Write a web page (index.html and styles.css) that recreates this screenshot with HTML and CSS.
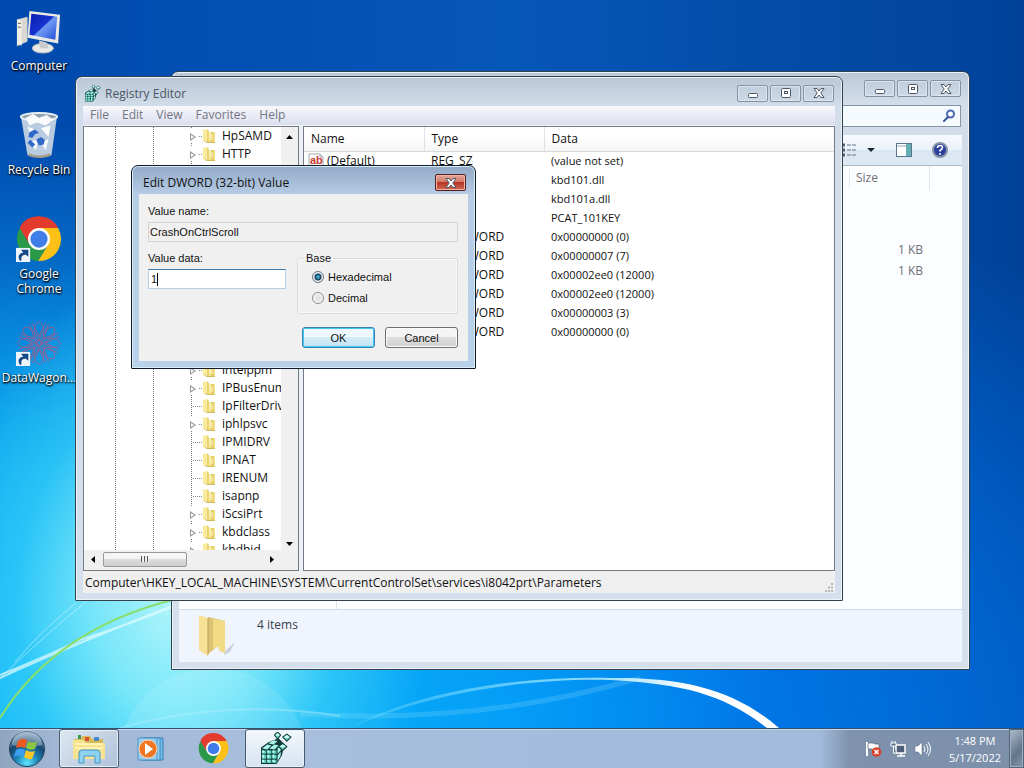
FILE: index.html
```html
<!DOCTYPE html>
<html lang="en">
<head>
<meta charset="utf-8">
<title>Registry Editor</title>
<link rel="stylesheet" href="styles.css">
</head>
<body>
<svg class="defs" width="0" height="0" aria-hidden="true">
  <defs>
    <linearGradient id="gold" x1="0" x2="1"><stop offset="0" stop-color="#fdf3a8"/><stop offset=".45" stop-color="#f0dc78"/><stop offset=".55" stop-color="#d9bf54"/><stop offset="1" stop-color="#f7e88c"/></linearGradient>
    <linearGradient id="screen" x1="0" x2="1" y1="0" y2="1"><stop offset="0" stop-color="#0a1cae"/><stop offset=".48" stop-color="#1633cf"/><stop offset=".52" stop-color="#6f9af0"/><stop offset="1" stop-color="#2250dd"/></linearGradient>
    <radialGradient id="orb" cx=".5" cy=".9" r=".9"><stop offset="0" stop-color="#5fe6ff"/><stop offset=".35" stop-color="#1b86b8"/><stop offset=".65" stop-color="#17456e"/><stop offset="1" stop-color="#8fb0cc"/></radialGradient>
  </defs>
  <symbol id="chrome" viewBox="0 0 48 48">
    <path fill="#e33b2e" d="M24 24 4.100 11A23 23 0 0 1 44 12.500z"/>
    <path fill="#fbc116" d="M24 12.500H44A23 23 0 0 1 23 47L34 29z"/>
    <path fill="#2a9a48" d="M4.100 12.500 14 29.800 24 35 31 33 23 47A23 23 0 0 1 4.100 12.500z"/>
    <path fill="#e33b2e" d="M4 12.600A23 23 0 0 1 44 12.500H24L13 28z"/>
    <circle cx="24" cy="24" r="11.500" fill="#fff"/><circle cx="24" cy="24" r="9" fill="#3f7de8"/>
  </symbol>
  <symbol id="key" viewBox="0 0 14 16">
    <path d="M1 2 6 1v13l-5-1z" fill="#f8ec9c"/><path d="M6 4h7v10H6z" fill="url(#gold)"/><path d="M1 13 6 14h7v1H5z" fill="#d3ba5c"/><path d="M8 3v8M10 6v6" stroke="#fffbd0"/><path d="M6 2v12" stroke="#d8bc50"/>
  </symbol>
  <symbol id="reg" viewBox="0 0 32 32">
    <path d="M2 15 9 10 19 6 25 12 22 23 17 31 2 31z" fill="#123a38"/>
    <path d="M3 16 8 12l4 1-4 4zM10 16l5-4 4 1-4 4zM9 11l5-3 4 1-4 3zM18 16l3-3v5l-3 3zM18 23l3-4v4l-3 5z" fill="#a9f7ea"/>
    <path d="M3 18h4v3H3zM8 18h4v3H8zM13 18h4v3h-4zM3 22h4v4H3zM8 22h4v4H8zM13 22h4v4h-4zM3 27h4v3H3zM8 27h4v3H8zM13 27h4v3h-4z" fill="#5ccdbb"/>
    <path d="M3 18h2v2H3zM8 18h2v2H8zM13 18h2v2h-2zM3 22h2v3H3zM8 22h2v3H8zM13 22h2v3h-2zM3 27h2v2H3zM8 27h2v2H8zM13 27h2v2h-2z" fill="#b8fff2"/>
    <path d="m18 0 3 3-3 4-3-4zM27 2l4 3-4 4-4-4zM23 11l4 3-4 4-4-4z" fill="#5bc5b4" stroke="#173b39"/><path d="m16 3 2-2 2 2-2 1zM24 5l3-2 3 2-3 1zM20 14l3-2 3 2-3 1z" fill="#d3fff8"/>
  </symbol>
  <symbol id="min" viewBox="0 0 12 12"><rect x="1.500" y="6.500" width="9" height="4" rx="1" fill="#fff" stroke="#4d5767"/></symbol>
  <symbol id="max" viewBox="0 0 12 12"><rect x="1.500" y="1.500" width="9" height="9" rx="1" fill="#fff" stroke="#4d5767"/><rect x="4.500" y="4.500" width="3" height="2" fill="#fff" stroke="#4d5767"/></symbol>
  <symbol id="close" viewBox="0 0 12 12"><path d="M1 1.500h3l2 2.500 2-2.500h3L7.800 6 11 10.500H8L6 8l-2 2.500H1L4.200 6z" fill="#fff" stroke="#4d5767"/></symbol>
  <symbol id="shortcut" viewBox="0 0 14 14"><path d="M0 0h14v14H0z" fill="#edf4fb"/><path d="M4 13C1 9 3 5 7 5L5 2h7v7L9.500 7C6 7 4.500 9 5.500 12z" fill="#174a86"/></symbol>
</svg>

<main class="desktop">
  <svg class="wallpaper" viewBox="0 0 1024 728" preserveAspectRatio="none" aria-hidden="true">
    <defs><linearGradient id="ray" x1="0" x2="1"><stop offset="0" stop-color="#8fe8ff" stop-opacity=".2"/><stop offset=".5" stop-color="#aef0ff" stop-opacity=".7"/><stop offset=".8" stop-color="#fff"/></linearGradient></defs>
    <circle cx="213" cy="764" r="96" fill="#fff" fill-opacity=".1"/>
    <path d="M120 728Q230 698 340 716" fill="none" stroke="#b7efff" stroke-opacity=".4" stroke-width="2"/>
    <path d="M300 714Q480 725 640 678" fill="none" stroke="#9fe6ff" stroke-opacity=".2" stroke-width="5"/>
    <path d="M0 675Q50 655 80 640Q130 624 172 607M0 678Q60 650 172 606" fill="none" stroke="#e4fcff" stroke-opacity=".7" stroke-width="2"/>
    <path d="M0 678Q45 635 88 600M15 662Q40 632 76 603" fill="none" stroke="#dffaff" stroke-opacity=".5" stroke-width="1"/>
    <path d="M0 718Q55 630 172 600" fill="none" stroke="#8ade6a" stroke-width="2"/>
    <path d="M350 728C420 690 520 676 610 678C685 677 735 690 779 728L767 728C725 695 685 684 610 680C530 678 430 692 350 728z" fill="url(#ray)"/>
  </svg>

  <nav class="shortcuts" aria-label="Desktop">
    <a class="shortcut" href="#computer">
      <svg class="shortcut-icon" viewBox="0 0 48 48" aria-hidden="true">
        <path d="m1 12 11-3v26l-11 5z" fill="#d9d7d2"/><path d="m1 12 5 1v26l-5-1z" fill="#efede8"/><path d="M2 16h3M2 20h3" stroke="#555"/>
        <ellipse cx="28" cy="42" rx="11" ry="5" fill="#e9e9e7" stroke="#b9b9b7"/><path d="m24 34 8 2 2 6h-9z" fill="#ccc"/>
        <path d="M14 3 46 7 44 37 12 31z" fill="#e9e9e5"/><path d="M16 6 43 9 41 33 14 28z" fill="url(#screen)"/>
      </svg><span>Computer</span></a>
    <a class="shortcut" href="#recycle">
      <svg class="shortcut-icon" viewBox="0 0 48 48" aria-hidden="true">
        <path d="M5 4 43 3 37 45Q24 50 12 45z" fill="#d3dde6" fill-opacity=".88"/><ellipse cx="24" cy="5" rx="19" ry="4" fill="#8d9dac" stroke="#e9f0f5" stroke-width="2"/>
        <path d="m10 6 8-4 6 4 8-3 7 5-8 6-9-3-8 3zM12 15l10 4-6 8zM26 17l10-3-2 12zM14 32l9-4-2 12zM26 32l8-4-3 12z" fill="#f8fafc"/>
        <path d="m14 21 6-3 4 4-4 1-3 4-4-1zM21 29l5-3 4 3-1 5-5 1zM15 29l5 5-3 3-5-5z" fill="#2f68c8"/><path d="M13 43Q24 48 36 43v3Q24 50 13 46z" fill="#a39d8a"/>
      </svg><span>Recycle Bin</span></a>
    <a class="shortcut" href="#chrome">
      <svg class="shortcut-icon" viewBox="0 0 48 48" aria-hidden="true"><use href="#chrome"/><use href="#shortcut" y="33" width="15" height="15"/></svg><span>Google Chrome</span></a>
    <a class="shortcut" href="#datawagon">
      <svg class="shortcut-icon" viewBox="0 0 48 48" aria-hidden="true">
        <g fill="none" stroke="#8c6394" stroke-width="1"><g id="petals"><ellipse cx="24" cy="12" rx="5" ry="10"/><ellipse cx="24" cy="36" rx="5" ry="10"/><path d="M17 3 24 17 31 3M17 45 24 31 31 45"/></g><use href="#petals" transform="rotate(45 24 24)"/><use href="#petals" transform="rotate(90 24 24)"/><use href="#petals" transform="rotate(135 24 24)"/></g>
        <use href="#shortcut" y="33" width="15" height="15"/></svg><span>DataWagon...</span></a>
  </nav>

  <section class="window explorer" aria-label="Explorer">
    <header class="titlebar explorer-title">
      <div class="controls"><button aria-label="Minimize"><svg><use href="#min"/></svg></button><button aria-label="Maximize"><svg><use href="#max"/></svg></button><button aria-label="Close"><svg><use href="#close"/></svg></button></div>
    </header>
    <div class="searchbox"><input type="search" aria-label="Search"><svg class="lens" viewBox="0 0 14 14" aria-hidden="true"><circle cx="8.500" cy="5" r="3.500" fill="#fff" stroke="#4a69b4" stroke-width="2"/><path d="m6 8-4 4" stroke="#37539b" stroke-width="2" stroke-linecap="round"/></svg></div>
    <div class="toolbar">
      <button class="views" aria-label="Change view"><svg width="34" height="14" viewBox="0 0 34 14"><path d="M0 2h3M0 7h3M0 12h3" stroke="#55616f" stroke-width="3"/><path d="M5 2h4M10 2h4M5 7h4M10 7h4M5 12h4M10 12h4" stroke="#66717f"/><path d="M25 5h8l-4 4z" fill="#1c2733"/></svg></button>
      <button aria-label="Preview pane"><svg width="16" height="14" viewBox="0 0 16 14"><rect x=".5" y=".5" width="15" height="13" fill="#fff" stroke="#5c7390"/><path d="M10 1h5v12h-5z" fill="#62afb4"/><path d="M1 3h9" stroke="#92a5bb"/></svg></button>
      <button aria-label="Help"><svg width="16" height="16" viewBox="0 0 16 16"><circle cx="8" cy="8" r="7" fill="#2a3f9c" stroke="#8592a8" stroke-width="2"/><path d="M5.500 6q0-2.500 2.500-2.500t2.500 2q0 1.500-2.500 3v1" fill="none" stroke="#fff" stroke-width="1.600"/><circle cx="8" cy="12" r="1" fill="#fff"/></svg></button>
    </div>
    <div class="explorer-body">
      <div class="nav-pane"></div>
      <div class="files"><div class="file-head"><span>Size</span></div><p>1 KB</p><p>1 KB</p></div>
    </div>
    <footer class="details"><svg width="40" height="44" viewBox="0 0 40 44" aria-hidden="true"><path d="m27 39 11-10-5 10-6 3z" fill="#8b8f98" fill-opacity=".35"/><path d="M11 4 28 8v32l-5-2-2-5-10 8z" fill="#dcc373"/><path d="M16 6 28 8v32l-5-2-2-5-5 3z" fill="#f1dc85"/><path d="M2 2 11 5v38L2 37z" fill="#f6e196"/><path d="M11 5v37" stroke="#b8a05a"/></svg><span>4 items</span></footer>
  </section>

  <section class="window regedit" aria-label="Registry Editor">
    <header class="titlebar">
      <svg class="app-icon" aria-hidden="true"><use href="#reg"/></svg><h1>Registry Editor</h1>
      <div class="controls"><button aria-label="Minimize"><svg><use href="#min"/></svg></button><button aria-label="Maximize"><svg><use href="#max"/></svg></button><button aria-label="Close"><svg><use href="#close"/></svg></button></div>
    </header>
    <nav class="menu"><button>File</button><button>Edit</button><button>View</button><button>Favorites</button><button>Help</button></nav>
    <div class="panes">
      <div class="tree-pane">
        <ul class="tree">
          <li class="parent"><svg><use href="#key"/></svg>HpSAMD</li>
          <li class="parent"><svg><use href="#key"/></svg>HTTP</li>
          <li></li><li></li><li></li><li></li><li></li><li></li><li></li><li></li><li></li><li></li><li></li>
          <li class="parent"><svg><use href="#key"/></svg>intelppm</li>
          <li class="parent"><svg><use href="#key"/></svg>IPBusEnum</li>
          <li><svg><use href="#key"/></svg>IpFilterDriv</li>
          <li class="parent"><svg><use href="#key"/></svg>iphlpsvc</li>
          <li><svg><use href="#key"/></svg>IPMIDRV</li>
          <li><svg><use href="#key"/></svg>IPNAT</li>
          <li><svg><use href="#key"/></svg>IRENUM</li>
          <li><svg><use href="#key"/></svg>isapnp</li>
          <li class="parent"><svg><use href="#key"/></svg>iScsiPrt</li>
          <li class="parent"><svg><use href="#key"/></svg>kbdclass</li>
          <li class="parent"><svg><use href="#key"/></svg>kbdhid</li>
        </ul>
        <div class="vscroll"><svg viewBox="0 0 7 4"><path d="M0 4 3.500 0 7 4z"/></svg><svg viewBox="0 0 7 4"><path d="M0 0h7L3.500 4z"/></svg></div>
        <div class="hscroll"><svg viewBox="0 0 4 7"><path d="M4 0v7L0 3.500z"/></svg><div class="thumb"><i></i></div><svg viewBox="0 0 4 7"><path d="M0 0v7l4-3.500z"/></svg></div>
      </div>
      <div class="list-pane">
        <table>
          <thead><tr><th>Name</th><th>Type</th><th>Data</th></tr></thead>
          <tbody>
            <tr><td><span class="value"><svg viewBox="0 0 16 16" aria-hidden="true"><path d="M1 1h11l3 3v11H1z" fill="#fffafa" stroke="#a9a9b0"/><path d="M12 1v3h3" fill="none" stroke="#a9a9b0"/><text x="2" y="11">ab</text></svg>(Default)</span></td><td>REG_SZ</td><td>(value not set)</td></tr>
            <tr><td></td><td></td><td>kbd101.dll</td></tr>
            <tr><td></td><td></td><td>kbd101a.dll</td></tr>
            <tr><td></td><td></td><td>PCAT_101KEY</td></tr>
            <tr><td></td><td>REG_DWORD</td><td>0x00000000 (0)</td></tr>
            <tr><td></td><td>REG_DWORD</td><td>0x00000007 (7)</td></tr>
            <tr><td></td><td>REG_DWORD</td><td>0x00002ee0 (12000)</td></tr>
            <tr><td></td><td>REG_DWORD</td><td>0x00002ee0 (12000)</td></tr>
            <tr><td></td><td>REG_DWORD</td><td>0x00000003 (3)</td></tr>
            <tr><td></td><td>REG_DWORD</td><td>0x00000000 (0)</td></tr>
          </tbody>
        </table>
      </div>
    </div>
    <footer class="status"><span>Computer\HKEY_LOCAL_MACHINE\SYSTEM\CurrentControlSet\services\i8042prt\Parameters</span><svg width="10" height="10" viewBox="0 0 10 10" aria-hidden="true"><path d="M7 1h2M4 4.500h2M7 4.500h2M1 8h2M4 8h2M7 8h2" stroke="#b5b5b5" stroke-width="2"/></svg></footer>
  </section>

  <section class="window dialog" role="dialog" aria-labelledby="dialog-title">
    <header class="dialog-title"><h2 id="dialog-title">Edit DWORD (32-bit) Value</h2><button class="red-close" aria-label="Close"><svg><use href="#close"/></svg></button></header>
    <form class="dialog-body">
      <label for="vname">Value name:</label>
      <input id="vname" class="readonly" value="CrashOnCtrlScroll" readonly>
      <div class="columns">
        <div class="data-field"><label for="vdata">Value data:</label><div class="edit"><input id="vdata" value="1"><i class="caret"></i></div></div>
        <fieldset><legend>Base</legend>
          <label><input type="radio" name="base" checked>Hexadecimal</label>
          <label><input type="radio" name="base">Decimal</label>
        </fieldset>
      </div>
      <div class="actions"><button type="button" class="primary">OK</button><button type="button">Cancel</button></div>
    </form>
  </section>
</main>

<footer class="taskbar">
  <button class="start" aria-label="Start"><svg width="38" height="38" viewBox="0 0 38 38"><circle cx="19" cy="19" r="17.500" fill="url(#orb)" stroke="#24415e"/><path d="M4 15a15 15 0 0 1 30 0Q19 20 4 15z" fill="#fff" fill-opacity=".3"/><path d="M10 11q4-4 9-1l-2 8q-4-2-9 0z" fill="#ee5a22"/><path d="M20 11q4 3 9 0l-2 8q-5 2-9-1z" fill="#8dc63f"/><path d="M8 20q4-3 9 0l-2 7q-4-3-9 0z" fill="#3d9df0"/><path d="M18 20q4 3 9 1l-3 8q-4 1-8-2z" fill="#fdc62b"/></svg></button>
  <button class="task open" aria-label="Windows Explorer"><svg width="34" height="34" viewBox="0 0 34 34"><path d="M2 7h7l1-3h8l2 3h11v18H2z" fill="#d9ba56"/><path d="M6 3h3v4H6z" fill="#3d9850"/><path d="M13 5h4v4h-4z" fill="#d64f36"/><path d="M22 5h5v4h-5z" fill="#4a88c9"/><path d="M1 8h11l2 3h19v16H1z" fill="#f5e392"/><path d="M3 12h28M3 16h28" stroke="#fff3b4" stroke-width="2"/><path d="M7 31V21q0-3 3-3h15q3 0 3 3v10h-5v-7H12v7z" fill="#8ed1f0" stroke="#4596c4"/></svg></button>
  <button class="task" aria-label="Media Player"><svg width="28" height="28" viewBox="0 0 28 28"><path d="M7 3h19v22H7z" fill="#70bde9" stroke="#347fb6"/><path d="M4 3h19v22H4z" fill="#91d0f2" stroke="#3c88bd"/><path d="M1 3h19v22H1z" fill="#9ccdec" stroke="#4b94c4"/><circle cx="11" cy="14" r="9" fill="#ee7622" stroke="#ffd6ac"/><path d="m8 8 8 6-8 6z" fill="#fff"/></svg></button>
  <button class="task" aria-label="Google Chrome"><svg width="31" height="31"><use href="#chrome"/></svg></button>
  <button class="task active" aria-label="Registry Editor"><svg width="33" height="33"><use href="#reg"/></svg></button>
  <div class="tray">
    <svg width="17" height="16" viewBox="0 0 17 16" aria-hidden="true"><path d="M2 1v14" stroke="#fff" stroke-width="2"/><path d="M3 2h5l2 1h4v7H9L7 8H3z" fill="#fff" stroke="#555f6b" stroke-width=".7"/><circle cx="11.500" cy="11" r="4.800" fill="#d8432f"/><path d="m9.500 9 4 4M13.500 9l-4 4" stroke="#fff" stroke-width="1.600"/></svg>
    <svg width="17" height="16" viewBox="0 0 17 16" aria-hidden="true"><path d="M6 4h9v8H6z" fill="#4c5f76" stroke="#fff" stroke-width="1.500"/><path d="M7 15h8M11 12v3" stroke="#fff" stroke-width="1.500"/><path d="M1 2h5v3H1zM2 0v2M5 0v2M3.500 5v7H6" fill="#52667f" stroke="#fff"/></svg>
    <svg width="17" height="16" viewBox="0 0 17 16" aria-hidden="true"><path d="M1 5h3l4-4v14l-4-4H1z" fill="#fff" stroke="#566475" stroke-width=".5"/><path d="M10 5q2 3 0 6M12 3q4 5 0 10M14 1q5 7 0 14" fill="none" stroke="#fff"/></svg>
    <time>1:48 PM<br>5/17/2022</time>
  </div>
  <button class="show-desktop" aria-label="Show desktop"></button>
</footer>
</body>
</html>
```
FILE: styles.css
```css
* { box-sizing: border-box; }
body { margin: 0; height: 100vh; display: flex; flex-direction: column; overflow: hidden; font: 12px/18px "Open Sans", "Noto Sans", sans-serif; color: #111; background: #0868c8; }
button, input { font: inherit; color: inherit; padding: 0; margin: 0; }
button { border: 0; background: none; }
h1, h2, p, ul { margin: 0; padding: 0; font-size: 12px; font-weight: 400; }
.defs { position: absolute; }

.desktop { position: relative; flex: 1; min-height: 0; background:
  radial-gradient(ellipse 250px 330px at 180px 600px, #b4f6fa 0%, #84ecfae0 35%, #3fd2f899 65%, #10a4f000 100%),
  radial-gradient(ellipse 600px 440px at 160px 700px, #18c4fa 0%, #08b0f9cc 40%, #0090f400 100%),
  radial-gradient(ellipse 380px 480px at 0 600px, #18bdf4 0%, #0996e4aa 55%, #0070d000 100%),
  radial-gradient(ellipse 900px 560px at 500px 728px, #0088f8 0%, #0074e8bb 50%, #0055c000 100%),
  linear-gradient(90deg, #0049ae 0%, #0757b8 50%, #00429a 100%); }
.wallpaper { position: absolute; width: 100%; height: 100%; }

.shortcuts { position: relative; width: 78px; display: flex; flex-direction: column; padding-top: 8px; }
.shortcut { display: flex; flex-direction: column; align-items: center; gap: 4px; height: 104px; color: #fff; text-decoration: none; text-align: center; line-height: 15px; text-shadow: 1px 1px 2px #000, 0 1px 2px #000; }
.shortcut-icon { width: 46px; height: 46px; }
.shortcut span { width: 76px; white-space: nowrap; display: flex; justify-content: center; }
.shortcut:nth-child(3) span { white-space: normal; padding: 0 8px; }

.window { position: absolute; display: flex; flex-direction: column; border: 1px solid #35404d; border-radius: 7px 7px 1px 1px; padding: 0 7px 7px; background: linear-gradient(#b9c7d6 0, #d2dde9 30px, #d5e0ec 100%); box-shadow: inset 0 0 0 1px #eaf3fa; }
.titlebar { display: flex; align-items: center; height: 29px; color: #4c5663; }
.app-icon { width: 17px; height: 17px; margin: 3px 4px 0 1px; }
.titlebar h1 { padding-top: 5px; }
.controls { display: flex; gap: 2px; margin-left: auto; padding: 3px 1px 0 0; }
.controls button { width: 31px; height: 17px; border: 1px solid #8392a4; border-radius: 2px; box-shadow: inset 0 0 0 1px #dce5ee; display: grid; place-items: center; }
.controls svg { width: 12px; height: 12px; }

.explorer { left: 171px; top: 71px; width: 799px; height: 599px; }
.explorer-title { height: 32px; align-items: flex-start; }
.explorer-title .controls { padding-top: 8px; }
.searchbox { height: 22px; margin: 1px 1px 8px; border: 1px solid #8796a6; background: #f5fafe; display: flex; align-items: center; padding-right: 4px; }
.searchbox input { flex: 1; border: 0; background: none; outline: 0; }
.lens { width: 14px; height: 14px; }
.toolbar { height: 31px; display: flex; justify-content: flex-end; align-items: center; gap: 20px; padding-right: 14px; background: linear-gradient(#f8fbfe, #e9f1fa 50%, #dae6f3 52%, #dfe9f4); border-bottom: 1px solid #a9b8c9; }
.toolbar button { display: grid; place-items: center; }
.explorer-body { flex: 1; display: flex; background: #fcfdfe; color: #6c7077; }
.nav-pane { width: 158px; border-right: 1px solid #dbe4ef; }
.files { flex: 1; text-align: right; }
.files p { padding-right: 39px; height: 21px; }
.file-head { height: 24px; margin: 0 32px 51px 0; border-right: 1px solid #e3e6ea; display: flex; justify-content: flex-end; align-items: center; }
.file-head span { width: 80px; height: 18px; text-align: left; padding-left: 6px; border-left: 1px solid #e3e6ea; }
.details { height: 53px; display: flex; gap: 20px; padding: 3px 18px; border-top: 1px solid #cfd9e7; background: #f0f4fd; color: #38414f; }
.details span { padding-top: 3px; }

.regedit { left: 75px; top: 76px; width: 768px; height: 525px; }
.menu { flex: none; display: flex; gap: 13px; height: 20px; padding: 0 7px 1px; color: #737580; background: linear-gradient(#f7f9fd, #e9ebf6 50%, #dadfee); border-bottom: 1px solid #f5f5f8; }
.panes { flex: 1; min-height: 0; display: flex; gap: 4px; background: #eceff3; }
.tree-pane { width: 216px; border: 1px solid #737b84; background: #fff; display: grid; grid-template: minmax(0, 1fr) 20px / minmax(0, 1fr) 17px; overflow: hidden; }
.tree { list-style: none; overflow: hidden; padding-left: 107px; background:
  repeating-linear-gradient(#777 0 1px, #fff 1px 2px) 31px 0 / 1px 100% no-repeat,
  repeating-linear-gradient(#777 0 1px, #fff 1px 2px) 69px 0 / 1px 100% no-repeat,
  repeating-linear-gradient(#777 0 1px, #fff 1px 2px) 107px 0 / 1px 100% no-repeat; }
.tree li { display: flex; align-items: center; height: 18px; padding-left: 11px; white-space: nowrap; background: repeating-linear-gradient(90deg, #888 0 1px, #fff 1px 2px) 2px 9px / 9px 1px no-repeat; }
.tree li.parent { background: linear-gradient(#fff, #fff) 0 2px / 7px 14px no-repeat, repeating-linear-gradient(90deg, #888 0 1px, #fff 1px 2px) 8px 9px / 4px 1px no-repeat; position: relative; }
.tree li.parent::before { content: ""; position: absolute; left: -1px; top: 6px; width: 6px; height: 8px; clip-path: polygon(0 0, 100% 50%, 0 100%); background: #999; }
.tree li.parent::after { content: ""; position: absolute; left: 0; top: 8px; width: 3px; height: 4px; background: #fff; clip-path: polygon(0 0, 100% 50%, 0 100%); }
.tree li svg { flex: none; width: 14px; height: 16px; margin-right: 6px; }
.vscroll { background: #f0f0f0; display: flex; flex-direction: column; align-items: center; justify-content: space-between; padding: 8px 1px 4px 0; }
.vscroll svg { width: 7px; height: 4px; }
.hscroll { grid-column: 1 / -1; background: #f0f0f0; display: flex; align-items: center; padding: 0 24px 2px 7px; }
.hscroll svg { width: 4px; height: 7px; }
.hscroll svg:last-child { margin-left: auto; }
.thumb { width: 84px; height: 15px; margin-left: 8px; border: 1px solid #999; border-radius: 2px; background: linear-gradient(#f5f5f5 50%, #dcdcdc 50%, #cfcfcf); display: grid; place-items: center; }
.thumb i { width: 8px; height: 6px; background: repeating-linear-gradient(90deg, #555 0 1px, #eee 1px 3px); }
.list-pane { flex: 1; border: 1px solid #737b84; background: #fff; overflow: hidden; }
table { width: 100%; border-collapse: collapse; table-layout: fixed; }
th, td { text-align: left; font-weight: 400; padding: 0; white-space: nowrap; }
th { height: 24px; padding: 0 0 0 7px; border-bottom: 1px solid #dadada; border-right: 1px solid #e2e2e2; background: linear-gradient(#fff 40%, #f5f5f6); }
th:last-child { border-right: 0; }
th:nth-child(-n+2) { width: 120px; }
td { height: 19px; padding-left: 7px; font-size: 11px; }
td:nth-child(-n+2) { font-size: 12px; }
td:first-child { padding-left: 4px; }
.value { display: flex; align-items: center; gap: 3px; }
.value svg { width: 16px; height: 16px; }
.value text { font: bold 11px "Liberation Sans", sans-serif; fill: #c83a32; }
.status { height: 22px; flex: none; display: flex; align-items: center; justify-content: space-between; padding: 2px 1px 0 2px; background: #f0eff0; }
.status svg { align-self: flex-end; }

.dialog { left: 131px; top: 165px; width: 345px; height: 204px; border-color: #111c29; background: linear-gradient(#92aac7, #b8cde6 30px, #b9d1ea); box-shadow: inset 0 0 0 1px #d9ecfa; }
.dialog-title { height: 28px; display: flex; align-items: center; justify-content: space-between; padding: 5px 2px 0 4px; }
.red-close { width: 31px; height: 17px; border: 1px solid #571e20; border-radius: 2px; background: linear-gradient(#e4a89c 0, #d17664 48%, #b63526 50%, #cf6c50); box-shadow: inset 0 0 0 1px #efb5a9; display: grid; place-items: center; }
.red-close svg { width: 12px; height: 12px; }
.dialog-body { flex: 1; padding: 10px 10px 10px 9px; background: #f0f0f0; font: 11px/14px "Liberation Sans", Arial, sans-serif; }
.dialog-body > label { display: block; }
.readonly { display: block; width: 100%; height: 20px; margin-top: 4px; padding: 0 1px; border: 1px solid #d5d5d5; background: #f0f0f0; outline: 0; }
.columns { display: flex; gap: 11px; margin-top: 9px; }
.data-field { width: 138px; }
.edit { position: relative; margin-top: 4px; }
.edit input { width: 100%; height: 20px; border: 1px solid #b5cfe7; border-top-color: #3d7bad; padding-left: 2px; background: #fff; outline: 0; }
.caret { position: absolute; left: 9px; top: 4px; width: 1px; height: 13px; background: #000; }
fieldset { flex: 1; min-width: 0; margin: 0; padding: 1px 14px 5px; border: 1px solid #dcdcdc; border-radius: 2px; box-shadow: inset 0 0 0 1px #f8f8f8; }
legend { padding: 0 2px; margin-left: -8px; }
fieldset label { display: flex; align-items: center; gap: 4px; height: 21px; }
input[type=radio] { appearance: none; width: 12px; height: 12px; border: 1px solid #8e8f8f; border-radius: 50%; background: radial-gradient(#ddd, #fafafa); box-shadow: inset 0 0 0 1px #f4f4f4; }
input[type=radio]:checked { background: radial-gradient(circle, #3fa6cf 0 1px, #12374e 3px, #d9dde0 4px); border-color: #647480; }
.actions { display: flex; justify-content: flex-end; gap: 10px; margin-top: 13px; }
.actions button { width: 73px; height: 21px; border: 1px solid #707070; border-radius: 3px; background: linear-gradient(#f4f4f4 48%, #dedede 50%, #d1d1d1); box-shadow: inset 0 0 0 1px #fafafa; }
.actions .primary { border-color: #3c7fb1; background: linear-gradient(#eef8fc 48%, #d3ecf7 50%, #c2e3f2); box-shadow: inset 0 0 0 1px #3fc9f3; }

.taskbar { flex: none; height: 40px; display: flex; border-top: 1px solid #33506e; background: linear-gradient(90deg, #8fa5be 0, #a2b8d5 60px, #a7bedd 300px, #a2bbda 820px, #7e92ad 850px, #7c90aa 100%); box-shadow: inset 0 1px #c6d7e9; }
.taskbar button { display: grid; place-items: center; }
.start { width: 54px; margin-right: 5px; }
.task { width: 60px; margin-right: 2px; border-radius: 3px; }
.task.open, .task.active { border: 1px solid #4a5a6d; box-shadow: inset 0 0 0 1px #e6f0f8; background: linear-gradient(135deg, #dde7f1, #aec2d8); }
.task.active { background: linear-gradient(#f2f8fc, #d6e4f1); }
.tray { margin-left: auto; display: flex; align-items: center; gap: 7px; padding-right: 8px; color: #fff; }
.tray svg:nth-child(2) { margin-left: 1px; }
.tray time { margin-left: 11px; line-height: 17px; text-align: center; font-size: 11px; }
.show-desktop { width: 15px; border: 1px solid #52657b; background: linear-gradient(135deg, #aebccb, #62758b 60%, #8496aa); box-shadow: inset 0 0 0 1px #9dafc1; }
```
